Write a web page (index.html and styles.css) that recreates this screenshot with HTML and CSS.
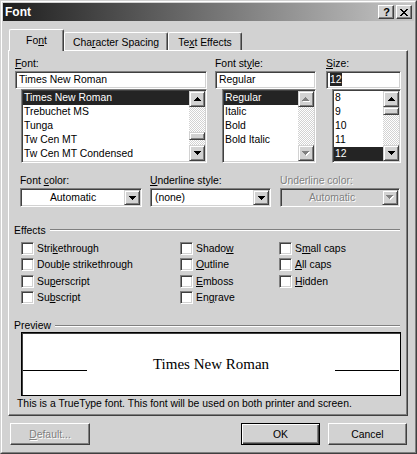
FILE: index.html
```html
<!DOCTYPE html>
<html>
<head>
<meta charset="utf-8">
<title>Font</title>
<link rel="stylesheet" href="styles.css">
</head>
<body>
<div class="window">
  <div class="frame">
    <div class="titlebar">
      <span class="title">Font</span>
      <div class="tbtns">
        <div class="tbtn help">?</div>
        <div class="tbtn"><svg width="8" height="7" viewBox="0 0 8 7"><path d="M0 0h2v1H0zM6 0h2v1H6zM1 1h2v1H1zM5 1h2v1H5zM2 2h4v1H2zM3 3h2v1H3zM2 4h4v1H2zM1 5h2v1H1zM5 5h2v1H5zM0 6h2v1H0zM6 6h2v1H6z" fill="#000"/></svg></div>
      </div>
    </div>
    <div class="client">
      <div class="tabs">
        <div class="tab tab-font sel">Fo<u>n</u>t</div>
        <div class="tab tab-spacing">Cha<u>r</u>acter Spacing</div>
        <div class="tab tab-effects">Te<u>x</u>t Effects</div>
      </div>
      <div class="panel">
        <div class="row1">
          <div class="col col-font">
            <div class="label"><u>F</u>ont:</div>
            <div class="textbox">Times New Roman</div>
            <div class="listbox ind6">
              <div class="items">
                <div class="item sel">Times New Roman</div>
                <div class="item">Trebuchet MS</div>
                <div class="item">Tunga</div>
                <div class="item">Tw Cen MT</div>
                <div class="item">Tw Cen MT Condensed</div>
              </div>
              <div class="vscroll">
                <div class="sbtn"><svg width="7" height="4" viewBox="0 0 7 4"><path d="M3 0h1v1H3zM2 1h3v1H2zM1 2h5v1H1zM0 3h7v1H0z" fill="#000"/></svg></div>
                <div class="track"><div class="thumb thumb-font"></div></div>
                <div class="sbtn"><svg width="7" height="4" viewBox="0 0 7 4"><path d="M0 0h7v1H0zM1 1h5v1H1zM2 2h3v1H2zM3 3h1v1H3z" fill="#000"/></svg></div>
              </div>
            </div>
          </div>
          <div class="col col-style">
            <div class="label">Font st<u>y</u>le:</div>
            <div class="textbox">Regular</div>
            <div class="listbox ind7">
              <div class="items">
                <div class="item sel">Regular</div>
                <div class="item">Italic</div>
                <div class="item">Bold</div>
                <div class="item">Bold Italic</div>
              </div>
              <div class="vscroll">
                <div class="sbtn"><svg width="8" height="5" viewBox="0 0 8 5"><path d="M4 1h1v1H4zM3 2h3v1H3zM2 3h5v1H2zM1 4h7v1H1z" fill="#fff"/><path d="M3 0h1v1H3zM2 1h3v1H2zM1 2h5v1H1zM0 3h7v1H0z" fill="#808080"/></svg></div>
                <div class="track"></div>
                <div class="sbtn"><svg width="8" height="5" viewBox="0 0 8 5"><path d="M1 1h7v1H1zM2 2h5v1H2zM3 3h3v1H3zM4 4h1v1H4z" fill="#fff"/><path d="M0 0h7v1H0zM1 1h5v1H1zM2 2h3v1H2zM3 3h1v1H3z" fill="#808080"/></svg></div>
              </div>
            </div>
          </div>
          <div class="col col-size">
            <div class="label"><u>S</u>ize:</div>
            <div class="textbox"><span class="selected-text">12</span></div>
            <div class="listbox ind6">
              <div class="items">
                <div class="item">8</div>
                <div class="item">9</div>
                <div class="item">10</div>
                <div class="item">11</div>
                <div class="item sel">12</div>
              </div>
              <div class="vscroll">
                <div class="sbtn"><svg width="7" height="4" viewBox="0 0 7 4"><path d="M3 0h1v1H3zM2 1h3v1H2zM1 2h5v1H1zM0 3h7v1H0z" fill="#000"/></svg></div>
                <div class="track"><div class="thumb"></div></div>
                <div class="sbtn"><svg width="7" height="4" viewBox="0 0 7 4"><path d="M0 0h7v1H0zM1 1h5v1H1zM2 2h3v1H2zM3 3h1v1H3z" fill="#000"/></svg></div>
              </div>
            </div>
          </div>
        </div>

        <div class="row2">
          <div class="col col-color">
            <div class="label">Font <u>c</u>olor:</div>
            <div class="combo">
              <div class="val center">Automatic</div>
              <div class="dd"><svg width="7" height="4" viewBox="0 0 7 4"><path d="M0 0h7v1H0zM1 1h5v1H1zM2 2h3v1H2zM3 3h1v1H3z" fill="#000"/></svg></div>
            </div>
          </div>
          <div class="col col-ustyle">
            <div class="label"><u>U</u>nderline style:</div>
            <div class="combo">
              <div class="val">(none)</div>
              <div class="dd"><svg width="7" height="4" viewBox="0 0 7 4"><path d="M0 0h7v1H0zM1 1h5v1H1zM2 2h3v1H2zM3 3h1v1H3z" fill="#000"/></svg></div>
            </div>
          </div>
          <div class="col col-ucolor">
            <div class="label disabled">Underline color:</div>
            <div class="combo off">
              <div class="val center disabled">Automatic</div>
              <div class="dd"><svg width="8" height="5" viewBox="0 0 8 5"><path d="M1 1h7v1H1zM2 2h5v1H2zM3 3h3v1H3zM4 4h1v1H4z" fill="#fff"/><path d="M0 0h7v1H0zM1 1h5v1H1zM2 2h3v1H2zM3 3h1v1H3z" fill="#808080"/></svg></div>
            </div>
          </div>
        </div>

        <div class="group-title effects-title"><span>Effects</span><div class="rule"></div></div>
        <div class="checks">
          <div class="check"><span class="box"></span>Stri<u>k</u>ethrough</div>
          <div class="check"><span class="box"></span>Shado<u>w</u></div>
          <div class="check"><span class="box"></span>S<u>m</u>all caps</div>
          <div class="check"><span class="box"></span>Doub<u>l</u>e strikethrough</div>
          <div class="check"><span class="box"></span><u>O</u>utline</div>
          <div class="check"><span class="box"></span><u>A</u>ll caps</div>
          <div class="check"><span class="box"></span>Su<u>p</u>erscript</div>
          <div class="check"><span class="box"></span><u>E</u>mboss</div>
          <div class="check"><span class="box"></span><u>H</u>idden</div>
          <div class="check"><span class="box"></span>Su<u>b</u>script</div>
          <div class="check"><span class="box"></span>En<u>g</u>rave</div>
        </div>

        <div class="group-title preview-title"><span>Preview</span><div class="rule"></div></div>
        <div class="preview">
          <div class="pline"></div>
          <div class="ptext">Times New Roman</div>
          <div class="pline"></div>
        </div>
        <div class="info">This is a TrueType font. This font will be used on both printer and screen.</div>
      </div>

      <div class="buttons">
        <div class="btn disabled"><u>D</u>efault...</div>
        <div class="spacer"></div>
        <div class="btn default">OK</div>
        <div class="btn">Cancel</div>
      </div>
    </div>
  </div>
</div>
</body>
</html>
```

FILE: styles.css
```css
html, body {
  margin: 0;
  padding: 0;
  background: #d2d2d2;
}

body {
  font-family: "Liberation Sans", Arial, sans-serif;
  font-size: 10.4px;
  color: #000;
}

u {
  text-decoration: underline;
  text-underline-offset: 1px;
}

.window {
  width: 417px;
  height: 454px;
  box-sizing: border-box;
  border: 1px solid;
  border-color: #d2d2d2 #404040 #404040 #d2d2d2;
  background: #d2d2d2;
}

.frame {
  height: 100%;
  box-sizing: border-box;
  border: 1px solid;
  border-color: #fff #808080 #808080 #fff;
  padding: 1px;
  display: flex;
  flex-direction: column;
}

/* Title bar */
.titlebar {
  height: 18px;
  flex: none;
  background: linear-gradient(to right, #1e1e1e, #c6c6c6);
  display: flex;
  align-items: center;
  padding: 0 2px 0 2px;
}

.title {
  flex: 1;
  color: #fff;
  font-weight: bold;
  font-size: 12px;
  line-height: 18px;
}

.tbtns {
  display: flex;
  gap: 2px;
}

.tbtn {
  width: 16px;
  height: 14px;
  box-sizing: border-box;
  background: #d2d2d2;
  border: 1px solid;
  border-color: #fff #404040 #404040 #fff;
  box-shadow: inset -1px -1px #808080;
  display: flex;
  align-items: center;
  justify-content: center;
}

.tbtn.help {
  font-weight: bold;
  font-size: 11px;
  line-height: 12px;
  padding-left: 1px;
}

/* Client */
.client {
  flex: 1;
  display: flex;
  flex-direction: column;
  padding-top: 8px;
}

.tabs {
  display: flex;
  align-items: flex-end;
  height: 21px;
  margin-left: 6px;
  position: relative;
  z-index: 1;
}

.tab {
  height: 18px;
  box-sizing: border-box;
  border-top: 1px solid #fff;
  border-left: 1px solid #fff;
  border-right: 1px solid #404040;
  box-shadow: inset -1px 0 #808080;
  border-radius: 2px 2px 0 0;
  display: flex;
  align-items: center;
  justify-content: center;
  background: #d2d2d2;
  padding-top: 1px;
}

.tab-font { width: 55px; }
.tab-spacing { width: 104px; }
.tab-effects { width: 74px; }

.tab.sel {
  height: 22px;
  margin-bottom: -1px;
  padding-top: 0;
}

.panel {
  margin-left: 5px;
  width: 400px;
  height: 366px;
  flex: none;
  box-sizing: border-box;
  border-left: 1px solid #fff;
  border-top: 1px solid #fff;
  border-right: 1px solid #404040;
  border-bottom: 1px solid #404040;
  box-shadow: inset -1px -1px #808080;
}

.label {
  height: 14px;
  line-height: 14px;
  white-space: nowrap;
}

.disabled {
  color: #808080;
  text-shadow: 1px 1px 0 #fff;
}

.row1 {
  display: flex;
  padding: 6px 0 0 6px;
}

.col-font { width: 192px; }
.col-style { width: 101px; margin-left: 8px; }
.col-size { width: 75px; margin-left: 10px; }

.textbox {
  height: 18px;
  box-sizing: border-box;
  background: #fff;
  border: 1px solid;
  border-color: #808080 #fff #fff #808080;
  box-shadow: inset 1px 1px #404040, inset -1px -1px #d2d2d2;
  padding-left: 3px;
  line-height: 16px;
  white-space: nowrap;
}

.selected-text {
  background: #242424;
  color: #fff;
  padding: 1px 0;
}

.listbox {
  height: 74px;
  box-sizing: border-box;
  display: flex;
  background: #fff;
  border: 1px solid;
  border-color: #808080 #fff #fff #808080;
  box-shadow: inset 1px 1px #404040, inset -1px -1px #d2d2d2;
  padding: 1px;
}

.ind6 { margin-left: 6px; }
.ind7 { margin-left: 7px; }

.items {
  flex: 1;
  min-width: 0;
}

.item {
  height: 14px;
  line-height: 14px;
  padding-left: 1px;
  white-space: nowrap;
  overflow: hidden;
}

.item.sel {
  background: #242424;
  color: #fff;
}

.vscroll {
  width: 16px;
  flex: none;
  display: flex;
  flex-direction: column;
}

.sbtn, .thumb, .dd {
  box-sizing: border-box;
  background: #d2d2d2;
  border: 1px solid;
  border-color: #d2d2d2 #404040 #404040 #d2d2d2;
  box-shadow: inset 1px 1px #fff, inset -1px -1px #808080;
  display: flex;
  align-items: center;
  justify-content: center;
}

.sbtn {
  height: 16px;
  flex: none;
}

.track {
  flex: 1;
  background-image: repeating-conic-gradient(#fff 0 25%, #d2d2d2 0 50%);
  background-size: 2px 2px;
}

.thumb {
  height: 8px;
}

.thumb-font {
  margin-top: 25px;
}

/* Row 2 */
.row2 {
  display: flex;
  padding: 11px 0 0 11px;
}

.col-color { width: 122px; }
.col-ustyle { width: 121px; margin-left: 8px; }
.col-ucolor { width: 120px; margin-left: 9px; }

.combo {
  height: 19px;
  box-sizing: border-box;
  display: flex;
  background: #fff;
  border: 1px solid;
  border-color: #808080 #fff #fff #808080;
  box-shadow: inset 1px 1px #404040, inset -1px -1px #d2d2d2;
  padding: 1px;
}

.combo.off {
  background: #d2d2d2;
}

.val {
  flex: 1;
  line-height: 15px;
  padding-left: 3px;
  white-space: nowrap;
}

.val.center {
  text-align: center;
  padding-left: 0;
}

.dd {
  width: 16px;
  height: 15px;
  flex: none;
}

/* Groups */
.group-title {
  display: flex;
  align-items: center;
  height: 14px;
  margin-left: 5px;
}

.effects-title {
  margin-top: 16px;
}

.preview-title {
  margin-top: 13px;
  height: 13px;
}

.rule {
  flex: 1;
  height: 0;
  border-top: 1px solid #808080;
  border-bottom: 1px solid #fff;
  margin-left: 4px;
  margin-right: 7px;
}

.checks {
  display: grid;
  grid-template-columns: 159px 99px 1fr;
  grid-auto-rows: 16.5px;
  margin: 3px 0 0 12px;
}

.check {
  display: flex;
  align-items: center;
  white-space: nowrap;
}

.box {
  width: 13px;
  height: 13px;
  flex: none;
  box-sizing: border-box;
  background: #fff;
  border: 1px solid;
  border-color: #808080 #fff #fff #808080;
  box-shadow: inset 1px 1px #404040, inset -1px -1px #d2d2d2;
  margin-right: 3px;
}

/* Preview */
.preview {
  margin-left: 12px;
  width: 380px;
  height: 64px;
  box-sizing: border-box;
  background: #fff;
  border: 1px solid #000;
  box-shadow: inset 1px 1px #404040;
  padding: 0 1px;
  display: flex;
  align-items: center;
  justify-content: space-between;
}

.pline {
  width: 64px;
  height: 1px;
  background: #000;
  margin-top: 12px;
}

.ptext {
  font-family: "Liberation Serif", "Times New Roman", serif;
  font-size: 15px;
}

.info {
  margin-left: 8px;
  height: 14px;
  line-height: 14px;
  margin-top: 1px;
  white-space: nowrap;
}

/* Buttons */
.buttons {
  display: flex;
  margin-top: 7px;
  padding: 0 7px;
  gap: 8px;
}

.spacer {
  flex: 1;
}

.btn {
  width: 80px;
  height: 22px;
  box-sizing: border-box;
  background: #d2d2d2;
  border: 1px solid;
  border-color: #fff #404040 #404040 #fff;
  box-shadow: inset -1px -1px #808080;
  display: flex;
  align-items: center;
  justify-content: center;
}

.btn.default {
  border-color: #000;
  box-shadow: inset 1px 1px #fff, inset -1px -1px #404040, inset -2px -2px #808080;
  width: 79px;
}

.buttons .btn:last-child {
  width: 79px;
}
```
